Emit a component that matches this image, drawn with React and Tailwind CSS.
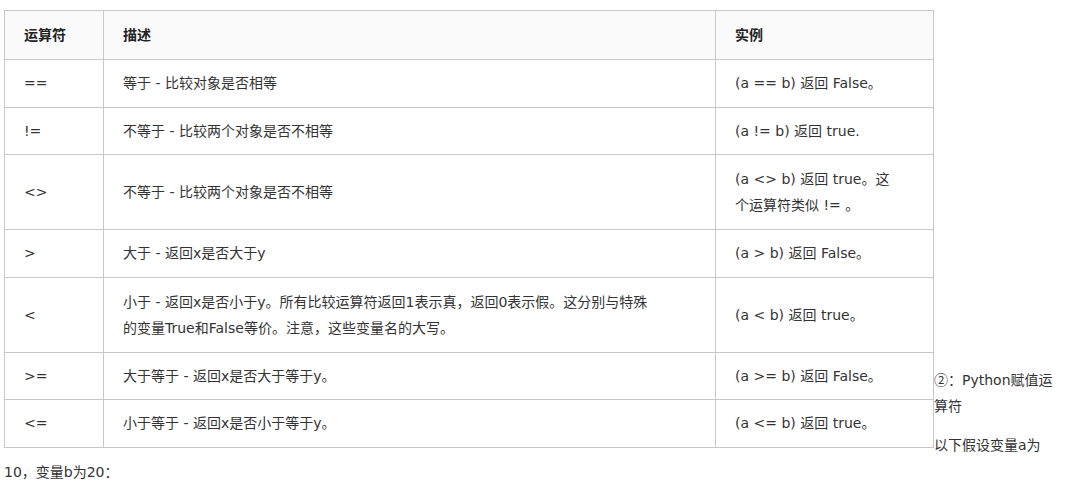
const rows = [
  { op: "==", desc: "等于 - 比较对象是否相等", ex: "(a == b) 返回 False。" },
  { op: "!=", desc: "不等于 - 比较两个对象是否不相等", ex: "(a != b) 返回 true." },
  {
    op: "<>",
    tall: true,
    desc: "不等于 - 比较两个对象是否不相等",
    ex: (
      <>
        (a &lt;&gt; b) 返回 true。这
        <br />
        个运算符类似 != 。
      </>
    ),
  },
  { op: ">", desc: "大于 - 返回x是否大于y", ex: "(a > b) 返回 False。" },
  {
    op: "<",
    tall: true,
    desc: (
      <>
        小于 - 返回x是否小于y。所有比较运算符返回1表示真，返回0表示假。这分别与特殊
        <br />
        的变量True和False等价。注意，这些变量名的大写。
      </>
    ),
    ex: "(a < b) 返回 true。",
  },
  { op: ">=", desc: "大于等于 - 返回x是否大于等于y。", ex: "(a >= b) 返回 False。" },
  { op: "<=", desc: "小于等于 - 返回x是否小于等于y。", ex: "(a <= b) 返回 true。" },
];

function Cell({ tall, children }) {
  return (
    <td
      className={
        tall
          ? "border border-[#c8c8c8] px-[19px] py-[11px] align-middle"
          : "border border-[#c8c8c8] px-[19px] pt-[10px] pb-[10.5px] align-middle"
      }
    >
      {children}
    </td>
  );
}

function App() {
  return (
    <div
      className="min-h-screen bg-white pt-[10px] pl-[4px] text-[14px] leading-[26px] text-[#333]"
      style={{ fontFamily: '"DejaVu Sans", "Noto Sans CJK SC", sans-serif' }}
    >
      <div className="flex items-end">
        <table className="w-[930px] shrink-0 border-collapse border border-[#c8c8c8]">
          <colgroup>
            <col className="w-[99px]" />
            <col className="w-[612px]" />
            <col className="w-[218px]" />
          </colgroup>
          <thead>
            <tr className="bg-[#fafafa]">
              <th className="border border-[#c8c8c8] px-[19px] py-[11px] text-left font-bold text-[#222]">运算符</th>
              <th className="border border-[#c8c8c8] px-[19px] py-[11px] text-left font-bold text-[#222]">描述</th>
              <th className="border border-[#c8c8c8] px-[19px] py-[11px] text-left font-bold text-[#222]">实例</th>
            </tr>
          </thead>
          <tbody>
            {rows.map((r) => (
              <tr key={r.op}>
                <Cell tall={r.tall}>{r.op}</Cell>
                <Cell tall={r.tall}>{r.desc}</Cell>
                <Cell tall={r.tall}>{r.ex}</Cell>
              </tr>
            ))}
          </tbody>
        </table>
        <div className="mb-[-10px] w-[138px]">
          <p>
            <span style={{ fontFamily: '"Noto Sans CJK SC", sans-serif' }}>②：</span>Python赋值运
            <br />
            算符
          </p>
          <p className="mt-[13px]">以下假设变量a为</p>
        </div>
      </div>
      <p className="mt-[11px]">10，变量b为20：</p>
    </div>
  );
}

export default App;
